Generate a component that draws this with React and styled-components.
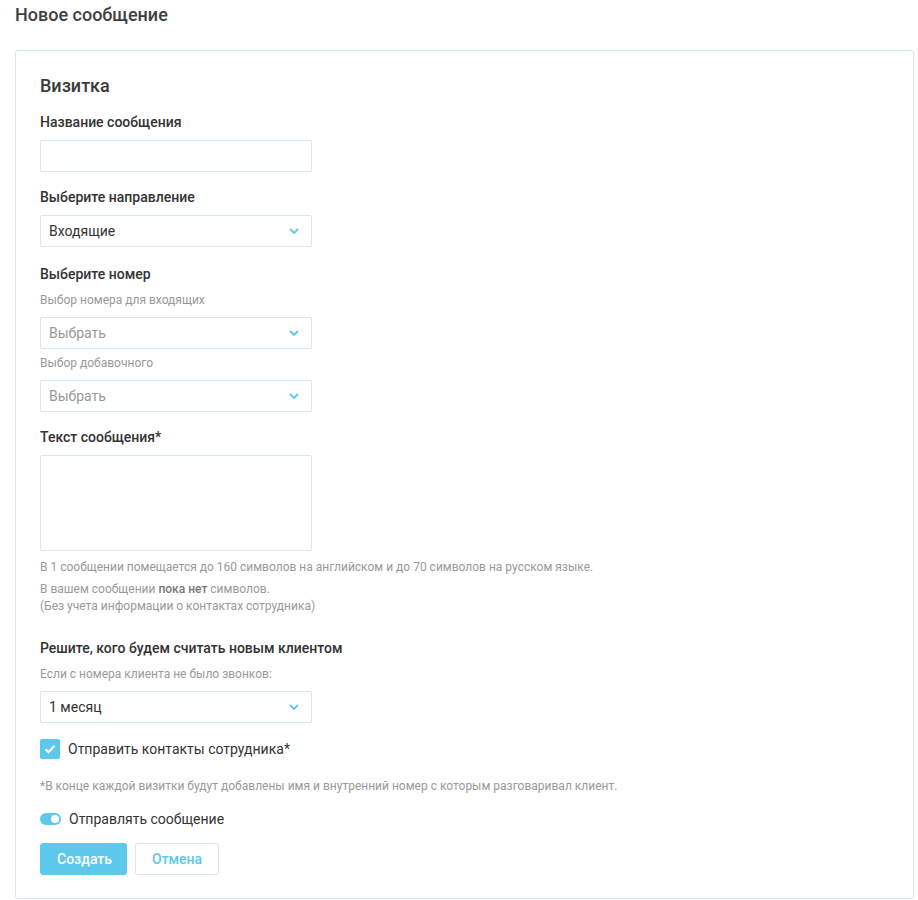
import styled, { createGlobalStyle } from "styled-components";

const GlobalStyle = createGlobalStyle`
	body {
		margin: 0;
		background: #fff;
		font-family: Roboto, "Noto Sans", sans-serif;
		color: #333;
	}
`;

const Page = styled.div`
	padding: 5px 4px 0 15px;
`;

const PageTitle = styled.h1`
	margin: 0 0 25px;
	font-size: 18px;
	line-height: 20px;
	font-weight: 500;
	color: #3f3f3f;
`;

const Card = styled.div`
	border: 1px solid #d5e6ee;
	border-radius: 3px;
	padding: 24px 24px 23px;
`;

const CardTitle = styled.h2`
	margin: 0 0 17px;
	font-size: 18px;
	line-height: 22px;
	font-weight: 500;
	color: #3a3a3a;
`;

const Label = styled.div`
	font-size: 14px;
	line-height: 17px;
	font-weight: 500;
	color: #333;
	margin-bottom: ${(p) => p.$mb || 9}px;
	margin-top: ${(p) => p.$mt || 0}px;
`;

const SubLabel = styled.div`
	font-size: 12px;
	line-height: 15px;
	color: #999;
	margin-bottom: 9px;
	margin-top: ${(p) => p.$mt || 0}px;
`;

const Input = styled.input`
	display: block;
	box-sizing: border-box;
	width: 272px;
	height: 32px;
	border: 1px solid #d5e6ee;
	border-radius: 2px;
	outline: none;
	margin-bottom: 17px;
`;

const SelectBox = styled.div`
	box-sizing: border-box;
	width: 272px;
	height: 32px;
	border: 1px solid #d5e6ee;
	border-radius: 2px;
	display: flex;
	align-items: center;
	justify-content: space-between;
	padding: 0 12px 0 8px;
	font-size: 14px;
	color: ${(p) => (p.$placeholder ? "#999" : "#333")};
	margin-bottom: ${(p) => p.$mb ?? 18}px;
`;

const TextArea = styled.textarea`
	display: block;
	box-sizing: border-box;
	width: 272px;
	height: 96px;
	border: 1px solid #d5e6ee;
	border-radius: 2px;
	resize: none;
	outline: none;
	margin: 0 0 8px;
`;

const Hint = styled.div`
	font-size: 12px;
	line-height: 17px;
	color: #999;
	margin-bottom: ${(p) => p.$mb || 0}px;

	b {
		font-weight: 500;
		color: #777;
	}
`;

const CheckRow = styled.label`
	display: flex;
	align-items: center;
	gap: 8px;
	font-size: 14px;
	line-height: 20px;
	color: #333;
	margin-top: ${(p) => p.$mt || 0}px;
`;

const CheckBox = styled.span`
	width: 20px;
	height: 20px;
	border-radius: 2px;
	background: #5bc8ec;
	display: flex;
	align-items: center;
	justify-content: center;
`;

const ToggleTrack = styled.span`
	position: relative;
	width: 21px;
	height: 12px;
	border-radius: 6px;
	background: #5bc8ec;
`;

const ToggleKnob = styled.span`
	position: absolute;
	right: 2px;
	top: 2px;
	width: 8px;
	height: 8px;
	border-radius: 50%;
	background: #fff;
`;

const Buttons = styled.div`
	display: flex;
	gap: 8px;
	margin-top: 14px;
`;

const Button = styled.button`
	box-sizing: border-box;
	height: 32px;
	padding: 0 16px;
	border-radius: 3px;
	font-family: Roboto, sans-serif;
	font-size: 14px;
	font-weight: 500;
	border: 1px solid ${(p) => (p.$primary ? "#5bc8ec" : "#d5e6ee")};
	background: ${(p) => (p.$primary ? "#5bc8ec" : "#fff")};
	color: ${(p) => (p.$primary ? "#fff" : "#5bc8ec")};
	width: ${(p) => (p.$primary ? 87 : 84)}px;
`;

const Chevron = () => (
	<svg width="10" height="6" viewBox="0 0 10 6">
		<path d="M1 1l4 4 4-4" fill="none" stroke="#5bc8ec" strokeWidth="1.8" />
	</svg>
);

const Select = ({ value, placeholder, mb }) => (
	<SelectBox $placeholder={!value} $mb={mb}>
		<span>{value || placeholder}</span>
		<Chevron />
	</SelectBox>
);

const App = () => {
	return (
		<Page>
			<GlobalStyle />
			<PageTitle>Новое сообщение</PageTitle>
			<Card>
				<CardTitle>Визитка</CardTitle>

				<Label>Название сообщения</Label>
				<Input />

				<Label>Выберите направление</Label>
				<Select value="Входящие" mb={19} />

				<Label $mb={10}>Выберите номер</Label>
				<SubLabel>Выбор номера для входящих</SubLabel>
				<Select placeholder="Выбрать" mb={7} />
				<SubLabel>Выбор добавочного</SubLabel>
				<Select placeholder="Выбрать" mb={17} />

				<Label>Текст сообщения*</Label>
				<TextArea />
				<Hint $mb={5}>
					В 1 сообщении помещается до 160 символов на английском и до 70 символов на русском языке.
				</Hint>
				<Hint>
					В вашем сообщении <b>пока нет</b> символов.
				</Hint>
				<Hint>(Без учета информации о контактах сотрудника)</Hint>

				<Label $mt={25} $mb={10}>Решите, кого будем считать новым клиентом</Label>
				<SubLabel>Если с номера клиента не было звонков:</SubLabel>
				<Select value="1 месяц" mb={16} />

				<CheckRow>
					<CheckBox>
						<svg width="12" height="10" viewBox="0 0 12 10">
							<path d="M1.5 5.2l3 3L10.5 1.8" fill="none" stroke="#fff" strokeWidth="2" />
						</svg>
					</CheckBox>
					Отправить контакты сотрудника*
				</CheckRow>

				<SubLabel $mt={20}>
					*В конце каждой визитки будут добавлены имя и внутренний номер с которым разговаривал клиент.
				</SubLabel>

				<CheckRow $mt={15}>
					<ToggleTrack>
						<ToggleKnob />
					</ToggleTrack>
					Отправлять сообщение
				</CheckRow>

				<Buttons>
					<Button $primary>Создать</Button>
					<Button>Отмена</Button>
				</Buttons>
			</Card>
		</Page>
	);
};

export default App;
